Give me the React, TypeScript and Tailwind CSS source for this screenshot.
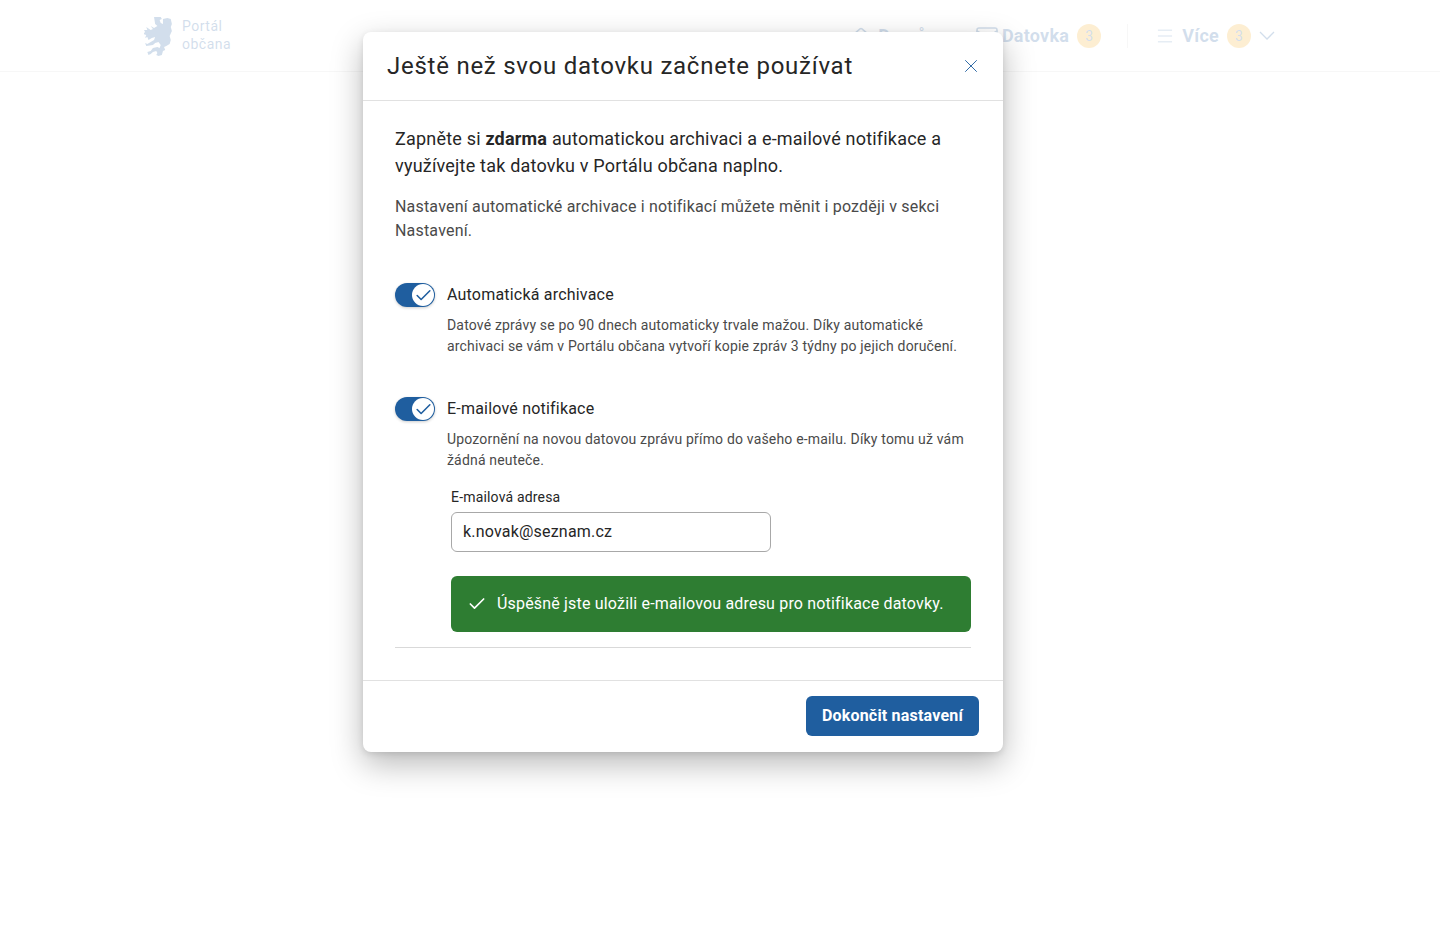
import { Check, Home, Mail, Menu, X } from "lucide-react";

function Lion() {
  return (
    <svg width="29" height="40" viewBox="3 0 26 40" preserveAspectRatio="none" fill="#1d5c9e">
      <path d="M12 1h6l1 2-2 1 1 3 2 1V3l4-1 3 1 1 5-1 3 1 4-2 5 1 4-1 4-3 2-2 1 1 3-2 1-1 4-3 1-2-1 1-2-1-2-3 1-2 2-2 1-1-3 3-1 2-3 4-1 2 1 1-3-2-3-3 1-2 2-6 1-1-3 2 1 3-2 3-2 1-3-3 1-3 2-1-3-2 1 1-3-3-1 2-2-1-2 3 0-1-3 4 3 2-1-2-3 3 2 3-2-2-2z" />
    </svg>
  );
}

function Badge() {
  return (
    <span className="flex h-6 w-6 items-center justify-center rounded-full bg-[#f7ab1c] text-sm font-normal text-[#1d5c9e]">
      3
    </span>
  );
}

function Toggle() {
  return (
    <span className="flex h-6 w-10 shrink-0 items-center justify-end rounded-full bg-[#1f5e9f] shadow-[0_1px_3px_rgba(0,0,0,0.2)]">
      <span className="mr-px flex h-[22px] w-[22px] items-center justify-center rounded-full bg-white">
        <Check size={19} strokeWidth={2} className="text-[#1f5e9f]" />
      </span>
    </span>
  );
}

function Setting({ title, text }: { title: string; text: string[] }) {
  return (
    <div>
      <div className="flex items-center gap-3">
        <Toggle />
        <span className="text-base leading-6 tracking-[0.2px] text-[#262626]">{title}</span>
      </div>
      <p className="mt-2 ml-[52px] text-sm leading-[21px] tracking-[0.175px] text-[#4a4a4a]">
        {text[0]}
        <br />
        {text[1]}
      </p>
    </div>
  );
}

export default function App() {
  return (
    <div className="relative h-[937px] overflow-hidden bg-white font-['Roboto',sans-serif]">
      <header className="flex h-[72px] items-center border-b border-[#d9d9d9] pl-[144px] pr-[165px]">
        <Lion />
        <div className="-mt-0.5 ml-[9px] text-sm leading-[18px] tracking-[0.5px] text-[#1d5c9e]">
          Portál
          <br />
          občana
        </div>
        <nav className="ml-auto flex items-center pt-px text-lg font-bold tracking-[0.25px] text-[#1d5c9e]">
          <Home size={18} />
          <span className="ml-2">Domů</span>
          <Mail size={24} strokeWidth={1.5} className="ml-12" />
          <span className="ml-[3px]">Datovka</span>
          <span className="ml-2"><Badge /></span>
          <span className="ml-[26px] mr-[30px] h-6 border-l border-[#d9d9d9]" />
          <Menu size={20} strokeWidth={1} className="-mx-[3px]" />
          <span className="ml-2.5">Více</span>
          <span className="ml-2"><Badge /></span>
          <svg width="16" height="10" viewBox="0 0 16 10" fill="none" stroke="currentColor" strokeWidth="1.25" className="ml-2">
            <path d="M1 1l7 7 7-7" />
          </svg>
        </nav>
      </header>

      <div className="absolute inset-0 bg-white/80" />

      <div className="absolute left-[363px] top-8 flex h-[720px] w-[640px] flex-col rounded-lg bg-white shadow-[0_12px_32px_rgba(0,0,0,0.28),0_2px_6px_rgba(0,0,0,0.1)]">
        <div className="flex h-[69px] shrink-0 items-center justify-between border-b border-[#e1e1e1] px-6">
          <h1 className="text-2xl tracking-[0.75px] text-[#262626]">Ještě než svou datovku začnete používat</h1>
          <X size={22} strokeWidth={1} className="-mr-[3px] text-[#1f5e9f]" />
        </div>

        <div className="flex-1 px-8 pt-6">
          <p className="text-lg leading-[27px] tracking-[0.2px] text-[#262626]">
            Zapněte si <b>zdarma</b> automatickou archivaci a e-mailové notifikace a
            <br />
            využívejte tak datovku v Portálu občana naplno.
          </p>
          <p className="mt-4 text-base leading-6 tracking-[0.19px] text-[#4a4a4a]">
            Nastavení automatické archivace i notifikací můžete měnit i později v sekci
            <br />
            Nastavení.
          </p>

          <div className="mt-10">
            <Setting
              title="Automatická archivace"
              text={[
                "Datové zprávy se po 90 dnech automaticky trvale mažou. Díky automatické",
                "archivaci se vám v Portálu občana vytvoří kopie zpráv 3 týdny po jejich doručení.",
              ]}
            />
          </div>
          <div className="mt-10">
            <Setting
              title="E-mailové notifikace"
              text={[
                "Upozornění na novou datovou zprávu přímo do vašeho e-mailu. Díky tomu už vám",
                "žádná neuteče.",
              ]}
            />
          </div>

          <div className="ml-14 mt-4">
            <label className="block text-sm leading-[21px] tracking-[0.175px] text-[#262626]">E-mailová adresa</label>
            <div className="mt-1 flex h-10 w-80 items-center rounded-md border border-[#a8a8a8] px-[11px] text-base tracking-[0.2px] text-[#262626]">
              k.novak@seznam.cz
            </div>
            <div className="mt-6 flex h-14 items-center rounded-md bg-[#2e7d32] pl-4 text-base tracking-[0.18px] text-white">
              <Check size={20} strokeWidth={2} />
              <span className="ml-2.5">Úspěšně jste uložili e-mailovou adresu pro notifikace datovky.</span>
            </div>
          </div>
          <div className="mt-[15px] border-b border-[#d9d9d9]" />
        </div>

        <div className="flex h-[72px] shrink-0 items-start justify-end border-t border-[#e1e1e1] pr-6 pt-[15px]">
          <button className="h-10 rounded-md bg-[#1f5e9f] px-4 text-base font-bold tracking-[0.2px] text-white">
            Dokončit nastavení
          </button>
        </div>
      </div>
    </div>
  );
}
